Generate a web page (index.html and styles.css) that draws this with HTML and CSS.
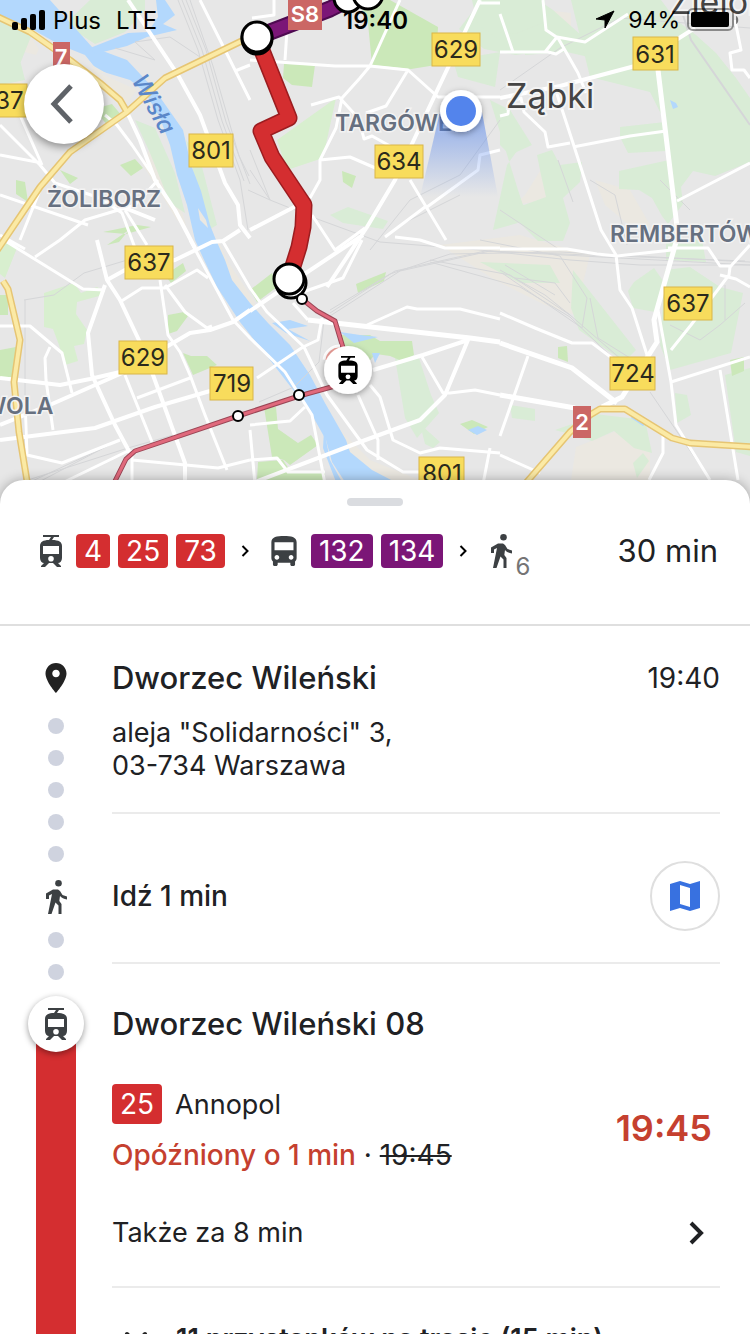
FILE: index.html
```html
<!DOCTYPE html>
<html lang="pl">
<head>
    <meta charset="UTF-8">
    <meta name="viewport" content="width=device-width, initial-scale=1.0">
    <title>Dworzec Wileński</title>
    <link rel="stylesheet" href="styles.css">
</head>
<body>
    <!-- shared icons -->
    <svg class="sprite" width="0" height="0" aria-hidden="true">
        <symbol id="tram" viewBox="0 0 22 32">
            <path fill-rule="evenodd" d="M3 0h16v2h-5l-2 3c7 0 10 2 10 6v12c0 3-2 5-4 5l3 3v1h-4l-4-4H9l-4 4H1v-1l3-3c-2 0-4-2-4-5V11c0-4 3-6 9-6l2-3H3zM3 11v8h16v-8zM11 21a2.800 2.800 0 1 0 0 5.600a2.800 2.800 0 1 0 0-5.600z"/>
        </symbol>
        <symbol id="bus" viewBox="4 2 16 19">
            <path d="M4 16c0 .88.39 1.670 1 2.220V20c0 .55.45 1 1 1h1c.55 0 1-.45 1-1v-1h8v1c0 .55.45 1 1 1h1c.55 0 1-.45 1-1v-1.780c.61-.55 1-1.340 1-2.220V6c0-3.500-3.580-4-8-4s-8 .5-8 4v10zm3.500 1c-.83 0-1.500-.67-1.500-1.500S6.670 14 7.500 14s1.500.67 1.500 1.500S8.330 17 7.500 17zm9 0c-.83 0-1.500-.67-1.500-1.500s.67-1.500 1.500-1.500 1.500.67 1.500 1.500-.67 1.500-1.500 1.500zm1.500-6H6V6h12v5z"/>
        </symbol>
        <symbol id="walk" viewBox="0 0 21 34">
            <circle cx="12.500" cy="3.300" r="3.300"/>
            <path d="M7 9.500h5l2 1.500 2.500 4 4.500 1.500v3c-3-.5-5.500-1.500-7-3.500l-.7 5 2.200 3V34h-3v-8.500l-3-3L5.500 34H2l4-20-3 1.500V19H0v-5.500z"/>
        </symbol>
        <symbol id="chevron" viewBox="0 0 16 24">
            <path d="M3 2l10 10L3 22" fill="none" stroke="currentColor" stroke-width="4"/>
        </symbol>
    </svg>

    <div class="app">
        <header class="map">
            <svg class="map-canvas" viewBox="0 0 750 504" preserveAspectRatio="xMidYMin slice" role="img" aria-label="Mapa Warszawy">
                <defs>
                    <linearGradient id="beam" x1="0" y1="0" x2="0" y2="1">
                        <stop offset="0" stop-color="#5384ec" stop-opacity="0.6"/>
                        <stop offset="1" stop-color="#5384ec" stop-opacity="0"/>
                    </linearGradient>
                    <filter id="drop" x="-50%" y="-50%" width="200%" height="200%">
                        <feDropShadow dx="0" dy="2" stdDeviation="3" flood-opacity="0.35"/>
                    </filter>
                </defs>
                <rect width="750" height="504" fill="#e7e7e7"/>

                <!-- sand -->
                <g fill="#ebe8e1">
                    <path d="M20 43l9-9 10 15-3 6-15-4zM65 60l32 12 40 18-12 16-20-12zM0 80l12-12 10 12v5H0zM143 165l10-25 20 35 14 55-10-10zM545 10l26 3v24l-18-8zM440 245l80-10 70 20-15 60-30-10-50-25zM525 195l25-40 5 25-10 20-30 5zM595 180l35 10 20 35-15 5-30-25zM685 165l6-20 6 17zM738 100l12 10v17zM571 480l5-33 40-16 34 18v31zM218 240l10 22 27 40 0 25-15-20-22-40zM300 380l40 50 30 30 50 20h-50l-45-60z"/>
                </g>
                <!-- woods -->
                <g fill="#d9ecd6">
                    <path d="M0 16l32 18-12 30-20 17zM0 60l20 0 5 20-25 5zM90 0h55v10l-20 22-30 12-30-20zM480 0h58l15 10 28 25 40 5 5 10-12 13-60-14-38 6-32-6-25-20 17-22zM453 60l47-8-5 35-37-10zM490 100l20 10 15 30-18 25-14 65 35-10-10-30zM525 30l30 7 10 15-40 3z"/>
                    <path d="M500 0h45v22l-30 12-15-2zM571 0h90l15 20 20 15 20 18 20 25 14 20v64l-35 14-22-5-12 16 2 17-15 20-6-8-10-18-13-8-20-1v-18l50-11-3-9-38 2-8-16v-10l45-5-15-30-60-15zM537 155l15-5 8 15 22-3-2 20-17 16 7 25-7 18h-25l-22-22-12-20 20 6 22-8-5-22zM500 115l10-5 22 35-22 10-10-10z"/>
                    <path d="M573 270l63 80-12 12-45-32-8-22zM634 282l20-14 10 14-9 30-22-4-5-17zM665 270l25-3 30 20 23 6-12 60-61 17-10-25zM725 375l25-7v88l-14-4zM675 393l12 2 4 20-14 8zM510 405l25 4v12l-23-3zM555 430l20-7 20-9 50 6 7 33-18-5-20-17-22 10-22-7zM633 463l10-10 6 8-12 17zM395 358l23-3 13 40 8 18-22 25-12-20zM420 424l20 18-7 6-8-4zM480 262l70 3 10 18h-40zM666 240l36 0 4 22-40-2z"/>
                    <path d="M135 120l20 8 20 45 10 40-15-10-20-50zM186 140l13 15 18 70-7 4-16-55zM330 215l18-8 40 14-5 8-40-6zM472 0l28 0 0 40-22-15z"/>
                </g>
                <!-- parks -->
                <g fill="#cbe8b9">
                    <path d="M358 0h32l48 27-2 38-25 4-39-4-4-42zM284 64l31 1-3 22-20-2-9-7zM107 245l12-3 10-12zM103 232l34-7 14 2-25 7zM16 180l9 2 3 20-12-8zM342 171l14 5-4 12-9-6zM168 315l16-3 4 4-11 15-9 3zM165 275l18-12 3 8-15 12zM250 290l22-17 5 14-20 15zM356 284l30-12-2 9-26 12zM558 347l9-1 1 16-10-4zM183 353l8 3 16 0 10 9-24 10zM264 407l12 0 2 22 20 14 13-8 7 10-28 20-6-5-12-3zM258 462l25-2 8 12h34v8h-68zM0 350l16-3v30H0zM0 295h8v20H0zM340 335l30 0 10 6 32 0 2 14-12 6-12-5-14-2-8 8-26-14zM460 424l12-4 16 7-14 7zM94 109l18-5 10 12-14 10zM60 170l18 8-8 6zM120 165l15-6 8 9-12 8zM730 360l14-3v14l-12 5z"/>
                </g>
                <path fill="#d8efcf" d="M44 293l30-10 7 10 16-6 6 4-4 5-22 6-1 12 11 16-3 14-10 2 4 15-13 4-6-20-6-16-9-2zM277 140l59-42-13 60-36 12zM0 240l17 8-12 30-5-4z"/>

                <!-- water -->
                <g fill="#b3d8fd">
                    <path d="M0 0H50L92 47 127 60 155 90 183 130 191 165 201 191 210 225 216 240 225 260 232 280 250 303 268 323 290 345 310 375 325 403 346 440 350 452 372 470 395 482H345L332 462 326 440 312 415 297 395 270 360 240 322 217 287 205 262 195 240 187 205 177 175 170 145 160 118 145 92 130 80 97 70 85 55 60 45 30 28 0 15z"/>
                    <path d="M90 48l38-15 20-1 10-15-2-17h9l10 15-12 9 14 6-30 7-20 9-32 8zM272 323l18-3 18 6-20 3 22 12-24-8zM340 332l20 3 18 2-24 6zM372 353l8 0-5 10zM468 430l10-4 9 4-10 5zM670 100l6 3 2 4-5 2zM632 415l14 9-3 2-12-8zM324 430l6 30 12 22h-6l-13-34z"/>
                </g>
                <path fill="#ebe8e1" d="M92 65l14 8-12 0zM198 208l8 12 2 8-8-8z"/>

                <!-- railways -->
                <g fill="none" stroke="#d5d6d8" stroke-width="1">
                    <path d="M178 0l20 50 20 70 22 60 8 50M182 0l20 50 20 71 22 60M186 0l20 50 20 72 24 62M190 0l23 66 26 90 10 20M115 48l40 12-20-18 35-5 30 20M250 170l20 30 50 20 60 22 100 8 90 10 70 5 120 0M330 310l60-36 60-20 110-2 190 10M330 313l65-42 90-20 260 10M330 316l70-45 90-20 260 14M430 260l80 15 60 40 52 45M430 262l90 25 50 30 50 48M480 240l80 16 27 42-5 30-80-55M590 298l8 40 40 25M325 312l-6 50-25 25-35 15M24 300l30-5 30-22 60-18M25 300v180M28 480l100-32 70-20M30 482l80-37M35 484l80-42M500 90l60-42 60-30 130 10M370 250l40-50 50-25 40-55M558 160l15 42M590 180l25 15 12 50M650 392l60 88M400 225l60-30M250 150l20 50-22-10M670 325l30 15 20-15 25-22M725 285v35M500 270l45 25 25 20M505 265l50 30M515 278l40 5 15 20M660 180l30 30M500 210l60 40"/>
                    <path d="M683 15l8 25 59 85" stroke-width="2"/>
                </g>

                <!-- streets -->
                <g fill="none" stroke="#fff" stroke-width="3" stroke-linejoin="round">
                    <path d="M200 0L235 70 250 100M235 71L250 65M250 60l85 6 35 0 38 4 30 27h62M408 70l-22 36-20 7M370 66l-10 12-18 20-6 30-16 32 0 20-10 18M370 66l30-66M311 105l28-8 20 22 5 20 8-3 18 10M320 160l30-3 30 13M410 180L446 240M425 207L385 237M395 237L420 240 445 248 500 248M500 150l-20 5-2 15-51 37M500 3l-20 0M274 0l0 15-22 3M285 60l2-30M312 215L335 250 365 228"/>
                    <path d="M500 14l13 38M543 0l3 30 12 8 20 35 8 20M500 52h48l8 2 8-5M545 52l12-15 28 5 43-28M555 88L573 143 601 230 616 255 620 290 632 308 648 358M573 147l57-11 36-5M500 116l8-2 1-12 12-4 3 14 21 20 3 15 22-4M677 201l73-38M735 20l6 30-11 3 2 17h12l6 8M668 248h40l12 18h12M750 245l-20 22-1 8-38 50-20 25M720 275l16 4 14 8M658 310L671 382 676 425 710 480M671 382L750 357M720 370l18 110M500 249l67 0 30 5 20 2 55-6M500 313l35 15 37 15h20l20 15M528 356l-28 80M500 455l40 18M663 435v18l-14 27"/>
                    <path d="M0 125l40 40 15 18 45 15 22 15 13 35M20 115l22 50M72 150l-30 35-22 55M0 155l42 8M0 195l88 30M0 235l25 14M60 240L85 220 135 205 158 180M105 115l12 10 15 20 22 32M125 210l22 35M35 257L60 240M7 242L83 289 105 290M160 280L168 335 180 352 190 375 205 415 227 470M165 285L185 312 207 328 212 326M0 326H30L62 353 72 393M50 347L45 358 46 380 53 430M120 302L142 288H165L197 270 208 278M125 375L152 442M137 398L190 378M25 400L27 455 62 463 120 440M132 450V484M132 460L218 468 250 460M60 484L130 450"/>
                    <path d="M303 292L343 278 362 240M293 303L308 320M367 325L407 307 417 309H460L500 319M422 357L443 393H450L475 390 500 395M358 395L378 440V460M370 385L380 397 393 440 420 453 440 448 500 453M250 425L290 421 305 407M250 460L277 458 288 472H325M257 378L303 347 318 340 322 318M250 430L255 484M490 448L483 484"/>
                    <path d="M190 240L233 320 250 338 285 372 312 415 325 484M222 240L250 288 267 312 304 347 327 395 367 450 403 472H420"/>
                </g>
                <g fill="none" stroke="#fff" stroke-width="4" stroke-linejoin="round">
                    <path d="M128 0L178 75 200 115 225 183 238 205 240 225 250 238M127 112L140 140 155 180 175 210 195 248M100 198L155 220M480 0l-45 95-40 85-28 47-40 60M250 230l48-25M250 311L303 275 363 235M97 240L107 280 120 300 145 353 165 408 185 463V484M105 285L88 333 92 375 115 425 130 453M107 280L125 270 175 260 212 242 223 241 240 230M0 378L60 385 90 379 120 372M0 425L52 404 120 374 190 333 210 330 233 322 250 310M0 440L95 428 155 407 210 391M373 370L423 355 468 340 445 395 420 420 360 442 250 484M500 98l60-12 75-20 60-38"/>
                </g>
                <g fill="none" stroke="#fff" stroke-width="5">
                    <path d="M658 70l20 165-24 85 3 22-35 55-20 10M308 320L470 338 500 342M500 343l72 25 45 35M500 395l75 13"/>
                </g>

                <!-- main roads -->
                <g fill="none" stroke-linejoin="round">
                    <path stroke="#e6c573" stroke-width="7" d="M-4 16l34 16 40 28 30 23 20 17 7 12M-4 252l44-65 30-35 57-40 38-34 87-42M3 281l5 8 12 51-6 42 5 50 9 55M525 484l45-52 20-17 10-6h25l47 29 18 5 64 4"/>
                    <path stroke="#fbeaa5" stroke-width="4" d="M-4 16l34 16 40 28 30 23 20 17 7 12M-4 252l44-65 30-35 57-40 38-34 87-42M3 281l5 8 12 51-6 42 5 50 9 55M525 484l45-52 20-17 10-6h25l47 29 18 5 64 4"/>
                </g>

                <!-- further part of the line -->
                <g fill="none" stroke-linejoin="round">
                    <path stroke="#9a4655" stroke-width="5" d="M302 299l15 12 18 10 12 40M335 386l-36 10-61 20-103 35-9 8-12 24"/>
                    <path stroke="#e0697c" stroke-width="3" d="M302 299l15 12 18 10 12 40M335 386l-36 10-61 20-103 35-9 8-12 24"/>
                </g>
                <!-- selected route -->
                <g fill="none" stroke-linejoin="round">
                    <path stroke="#4e0a50" stroke-width="17" d="M257 37l73-28 40-20"/>
                    <path stroke="#7b1677" stroke-width="13" d="M257 37l73-28 40-20"/>
                    <path stroke="#9c1d20" stroke-width="17" d="M257 38l32 80-28 13 11 26 32 48-1 22-4 20-10 32"/>
                    <path stroke="#d42e30" stroke-width="14" d="M257 38l32 80-28 13 11 26 32 48-1 22-4 20-10 32"/>
                </g>
                <g fill="#fff" stroke="#000">
                    <circle cx="257" cy="39" r="15" stroke-width="3"/>
                    <circle cx="257" cy="37" r="15" stroke-width="3"/>
                    <circle cx="348" cy="-2" r="14" stroke-width="3"/>
                    <circle cx="368" cy="-6" r="15" stroke-width="3"/>
                    <circle cx="291" cy="283" r="15" stroke-width="3"/>
                    <circle cx="289" cy="279" r="15" stroke-width="3"/>
                    <circle cx="302" cy="299" r="5" stroke-width="2"/>
                    <circle cx="299" cy="395" r="5" stroke-width="2"/>
                    <circle cx="238" cy="416" r="5" stroke-width="2"/>
                </g>

                <!-- place names -->
                <g class="district">
                    <text x="47" y="207">ŻOLIBORZ</text>
                    <text x="335" y="131">TARGÓWEK</text>
                    <text x="610" y="242">REMBERTÓW</text>
                    <text x="-17" y="414">WOLA</text>
                </g>
                <g class="town">
                    <text x="506" y="108">Ząbki</text>
                    <text x="670" y="14">Zielonka</text>
                </g>
                <text class="river" transform="translate(131 80) rotate(61)">Wisła</text>

                <!-- road numbers -->
                <g class="road">
                    <rect x="-20" y="84" width="47" height="33"/><text x="2" y="109">637</text>
                    <rect x="432" y="33" width="48" height="33"/><text x="456" y="58">629</text>
                    <rect x="633" y="37" width="45" height="33"/><text x="655" y="63">631</text>
                    <rect x="375" y="145" width="48" height="33"/><text x="399" y="170">634</text>
                    <rect x="189" y="134" width="44" height="33"/><text x="211" y="159">801</text>
                    <rect x="125" y="246" width="48" height="33"/><text x="149" y="271">637</text>
                    <rect x="119" y="341" width="48" height="33"/><text x="143" y="366">629</text>
                    <rect x="210" y="367" width="43" height="33"/><text x="232" y="392">719</text>
                    <rect x="664" y="287" width="48" height="33"/><text x="688" y="312">637</text>
                    <rect x="610" y="357" width="45" height="33"/><text x="633" y="382">724</text>
                    <rect x="419" y="457" width="45" height="33"/><text x="442" y="482">801</text>
                </g>
                <g class="highway">
                    <rect x="53" y="42" width="17" height="31"/><text x="61" y="65">7</text>
                    <rect x="288" y="-2" width="34" height="32"/><text x="305" y="22">S8</text>
                    <rect x="573" y="406" width="18" height="32"/><text x="582" y="430">2</text>
                </g>

                <!-- my position -->
                <path d="M440 112l-20 85h78l-16-85z" fill="url(#beam)"/>
                <circle cx="461" cy="111" r="21" fill="#fff" filter="url(#drop)"/>
                <circle cx="461" cy="111" r="15" fill="#5384ec"/>

                <!-- live vehicle -->
                <g fill="none" stroke-width="3">
                    <path d="M326 360a14 14 0 0 1 14-12" stroke="#fff" stroke-width="7"/>
                    <path d="M327 360a12 12 0 0 1 13-11" stroke="#eda19b"/>
                    <path d="M332 360a8 8 0 0 1 8-6" stroke="#d43a33"/>
                </g>
                <circle cx="348" cy="370" r="24" fill="#fff" filter="url(#drop)"/>
                <use href="#tram" x="338" y="356" width="20" height="28"/>
            </svg>

            <div class="status-bar">
                <div class="status-left">
                    <svg width="34" height="20" viewBox="0 0 34 20" aria-hidden="true">
                        <rect x="0" y="12" width="6" height="8" rx="2"/>
                        <rect x="9" y="8" width="6" height="12" rx="2"/>
                        <rect x="18" y="4" width="6" height="16" rx="2"/>
                        <rect x="27" y="0" width="6" height="20" rx="2"/>
                    </svg>
                    <span>Plus</span>
                    <span class="network">LTE</span>
                </div>
                <time class="clock">19:40</time>
                <div class="status-right">
                    <svg width="20" height="20" viewBox="0 0 20 20" aria-hidden="true"><path d="M19 1L10 18V10L1 9z" stroke="#000" stroke-linejoin="round"/></svg>
                    <span class="charge">94%</span>
                    <svg width="52" height="24" viewBox="0 0 52 24" aria-hidden="true">
                        <rect x="1" y="1" width="45" height="21" rx="5" fill="none" stroke="#000" stroke-opacity="0.4" stroke-width="2"/>
                        <rect x="4" y="4" width="38" height="15" rx="2"/>
                        <path d="M49 8c3 1 3 7 0 8z" opacity="0.5"/>
                    </svg>
                </div>
            </div>

            <button class="back-button" aria-label="Wstecz">
                <svg width="24" height="40" viewBox="0 0 24 40"><path d="M21 2L4 20l17 18" fill="none" stroke="#5f6368" stroke-width="5"/></svg>
            </button>
        </header>

        <main class="sheet">
            <div class="handle"></div>
            <div class="summary">
                <svg class="tram-icon"><use href="#tram"/></svg>
                <span class="line">4</span>
                <span class="line">25</span>
                <span class="line">73</span>
                <svg class="separator"><use href="#chevron"/></svg>
                <svg class="bus-icon"><use href="#bus"/></svg>
                <span class="line line-bus">132</span>
                <span class="line line-bus">134</span>
                <svg class="separator"><use href="#chevron"/></svg>
                <span class="walk-part"><svg class="walk-icon"><use href="#walk"/></svg><small>6</small></span>
                <span class="duration">30 min</span>
            </div>

            <ol class="steps">
                <li class="step">
                    <div class="rail rail-start">
                        <svg class="pin-icon" viewBox="5 2 14 20"><path d="M12 2C8.130 2 5 5.130 5 9c0 5.250 7 13 7 13s7-7.750 7-13c0-3.870-3.130-7-7-7zm0 9.500c-1.380 0-2.500-1.120-2.500-2.500s1.120-2.500 2.500-2.500 2.500 1.120 2.500 2.500-1.120 2.500-2.500 2.500z"/></svg>
                        <i class="dot"></i><i class="dot"></i><i class="dot"></i>
                    </div>
                    <div class="step-body place">
                        <div class="row">
                            <h2>Dworzec Wileński</h2>
                            <time class="start-time">19:40</time>
                        </div>
                        <p>aleja "Solidarności" 3,<br>03-734 Warszawa</p>
                    </div>
                </li>

                <li class="step">
                    <div class="rail">
                        <i class="dot"></i><i class="dot"></i>
                        <svg class="walk-icon"><use href="#walk"/></svg>
                        <i class="dot"></i>
                    </div>
                    <div class="step-body walk">
                        <h3>Idź 1 min</h3>
                        <button class="map-button" aria-label="Pokaż na mapie">
                            <svg width="30" height="30" viewBox="0 0 30 30"><path fill="#3871e0" fill-rule="evenodd" d="M0 3l10-3 10 3 10-3v27l-10 3-10-3-10 3zM10 4v19l10 3V7z"/></svg>
                        </button>
                    </div>
                </li>

                <li class="step">
                    <div class="rail">
                        <i class="dot"></i>
                        <span class="stop-icon"><svg class="tram-icon"><use href="#tram"/></svg></span>
                        <i class="track"></i>
                    </div>
                    <div class="step-body ride">
                        <h2>Dworzec Wileński 08</h2>
                        <div class="departure">
                            <div>
                                <div class="direction"><span class="line line-tall">25</span> Annopol</div>
                                <p><span class="delay">Opóźniony o 1 min</span> · <s>19:45</s></p>
                            </div>
                            <time class="real-time">19:45</time>
                        </div>
                        <button class="next-button">
                            Także za 8 min
                            <svg width="16" height="24"><use href="#chevron"/></svg>
                        </button>
                    </div>
                </li>

                <li class="step">
                    <div class="rail"><i class="track track-next"></i></div>
                    <button class="stops-button">
                        <svg width="24" height="16" viewBox="0 0 24 16"><path d="M3 3l9 9 9-9" fill="none" stroke="#222" stroke-width="4" stroke-linecap="round"/></svg>
                        11 przystanków na trasie (15 min)
                    </button>
                </li>
            </ol>
        </main>
    </div>
</body>
</html>
```
FILE: styles.css
```css
* {
    box-sizing: border-box;
}

body {
    margin: 0;
    font-family: Inter, "Liberation Sans", sans-serif;
    font-size: 27px;
    color: #202124;
    background-color: #fff;
}

h2, h3, p {
    margin: 0;
}

button {
    font: inherit;
    color: inherit;
    border: none;
    background: none;
    padding: 0;
    cursor: pointer;
}

svg {
    display: block;
    flex: none;
}

.sprite {
    position: absolute;
}

.app {
    height: 100vh;
    overflow: hidden;
}

/* map */
.map {
    position: relative;
    height: 504px;
}

.map-canvas {
    width: 100%;
    height: 100%;
}

.map-canvas text {
    paint-order: stroke;
}

.district {
    font-size: 23px;
    font-weight: 600;
    fill: #667080;
    stroke: #f3f3f3;
    stroke-width: 3px;
}

.town {
    font-size: 34px;
    fill: #444;
    stroke: #f3f3f3;
    stroke-width: 4px;
}

.river {
    font-size: 24px;
    font-style: italic;
    font-weight: 500;
    fill: #5b87c9;
}

.road {
    font-size: 24px;
    text-anchor: middle;
    fill: #2b2a1c;
}

.road rect {
    fill: #f8dc5c;
    stroke: #d9b648;
}

.highway {
    font-size: 22px;
    font-weight: 600;
    text-anchor: middle;
    fill: #fff;
}

.highway rect {
    fill: #cb6765;
}

.status-bar {
    position: absolute;
    top: 0;
    left: 0;
    right: 0;
    height: 40px;
    padding: 0 11px 0 12px;
    display: grid;
    grid-template-columns: 1fr auto 1fr;
    align-items: center;
    font-size: 24px;
    color: #000;
}

.status-left,
.status-right {
    display: flex;
    align-items: center;
    gap: 7px;
}

.status-right {
    justify-content: flex-end;
}

.network {
    margin-left: 8px;
}

.clock {
    font-weight: 600;
}

.charge {
    margin-left: 6px;
    font-size: 23px;
}

.back-button {
    position: absolute;
    top: 64px;
    left: 24px;
    width: 80px;
    height: 80px;
    padding-right: 4px;
    display: flex;
    align-items: center;
    justify-content: center;
    border-radius: 50%;
    background-color: #fff;
    box-shadow: 0 3px 8px rgba(0, 0, 0, 0.4);
}

/* bottom sheet */
.sheet {
    position: relative;
    margin-top: -24px;
    padding-top: 18px;
    border-radius: 24px 24px 0 0;
    background-color: #fff;
    box-shadow: 0 0 12px rgba(0, 0, 0, 0.3);
}

.handle {
    width: 56px;
    height: 8px;
    margin: 0 auto;
    border-radius: 4px;
    background-color: #dadce0;
}

.summary {
    display: flex;
    align-items: center;
    gap: 8px;
    padding: 28px 32px 56px 40px;
    border-bottom: 2px solid #dfdfdf;
}

.line {
    padding: 0 8px;
    border-radius: 4px;
    font-size: 28px;
    line-height: 34px;
    color: #fff;
    background-color: #d42e30;
}

.line-bus {
    background-color: #7b1677;
}

.line-tall {
    line-height: 40px;
}

.tram-icon {
    width: 22px;
    height: 32px;
    fill: #3c4043;
}

.bus-icon {
    width: 26px;
    height: 30px;
    fill: #3c4043;
}

.walk-icon {
    width: 21px;
    height: 34px;
    fill: #3c4043;
}

.summary .tram-icon,
.summary .bus-icon {
    margin-right: 6px;
}

.separator {
    width: 8px;
    height: 12px;
    margin: 0 8px;
    color: #000;
}

.summary .separator + .bus-icon {
    margin-left: 6px;
}

.walk-part {
    display: flex;
    align-items: flex-start;
    gap: 3px;
    height: 34px;
    margin-left: 8px;
}

.walk-part small {
    padding-top: 20px;
    font-size: 24px;
    line-height: 26px;
    color: #757575;
}

.duration {
    margin-left: auto;
    font-size: 31px;
    line-height: 34px;
}

/* timeline */
.steps {
    margin: 0;
    padding: 0;
    list-style: none;
}

.step {
    display: grid;
    grid-template-columns: 112px 1fr;
    padding-right: 30px;
}

.rail {
    display: flex;
    flex-direction: column;
    align-items: center;
    gap: 16px;
}

.rail-start {
    padding-top: 37px;
}

.pin-icon {
    width: 22px;
    height: 30px;
    margin-bottom: 9px;
    fill: #222;
}

.dot {
    width: 16px;
    height: 16px;
    border-radius: 50%;
    background-color: #cfd3df;
}

.rail .walk-icon {
    margin: 2px 0;
}

.stop-icon {
    z-index: 1;
    display: flex;
    align-items: center;
    justify-content: center;
    width: 56px;
    height: 56px;
    border-radius: 50%;
    background-color: #fff;
    box-shadow: 0 2px 6px rgba(0, 0, 0, 0.4);
}

.track {
    flex: 1;
    width: 40px;
    margin-top: -32px;
    background-color: #d42e30;
}

.track-next {
    margin-top: 0;
}

.step-body {
    border-bottom: 2px solid #ebebeb;
}

h2 {
    font-size: 31px;
    font-weight: 500;
    line-height: 40px;
}

h3 {
    font-size: 28px;
    font-weight: 500;
}

.row {
    display: flex;
    justify-content: space-between;
    align-items: center;
}

.start-time {
    font-size: 28px;
}

.place {
    padding: 32px 0 30px;
}

.place p {
    margin-top: 18px;
    line-height: 33px;
}

.walk {
    display: flex;
    align-items: center;
    justify-content: space-between;
    height: 150px;
    padding-top: 16px;
}

.map-button {
    display: flex;
    align-items: center;
    justify-content: center;
    width: 70px;
    height: 70px;
    border: 2px solid #dfdfdf;
    border-radius: 50%;
}

.ride {
    padding-top: 40px;
}

.departure {
    display: flex;
    align-items: center;
    justify-content: space-between;
    margin-top: 40px;
    padding-right: 8px;
}

.direction {
    display: flex;
    align-items: center;
    gap: 13px;
}

.departure p {
    margin-top: 14px;
    font-size: 28px;
    line-height: 34px;
}

.delay {
    font-weight: 500;
    color: #c5402f;
}

.real-time {
    font-size: 36px;
    font-weight: 600;
    color: #c5402f;
}

.next-button {
    display: flex;
    align-items: center;
    justify-content: space-between;
    width: 100%;
    margin-top: 8px;
    padding: 36px 16px 36px 0;
    line-height: 34px;
}

.stops-button {
    display: flex;
    align-items: center;
    gap: 28px;
    padding: 34px 12px;
    font-weight: 600;
    line-height: 34px;
}
```
